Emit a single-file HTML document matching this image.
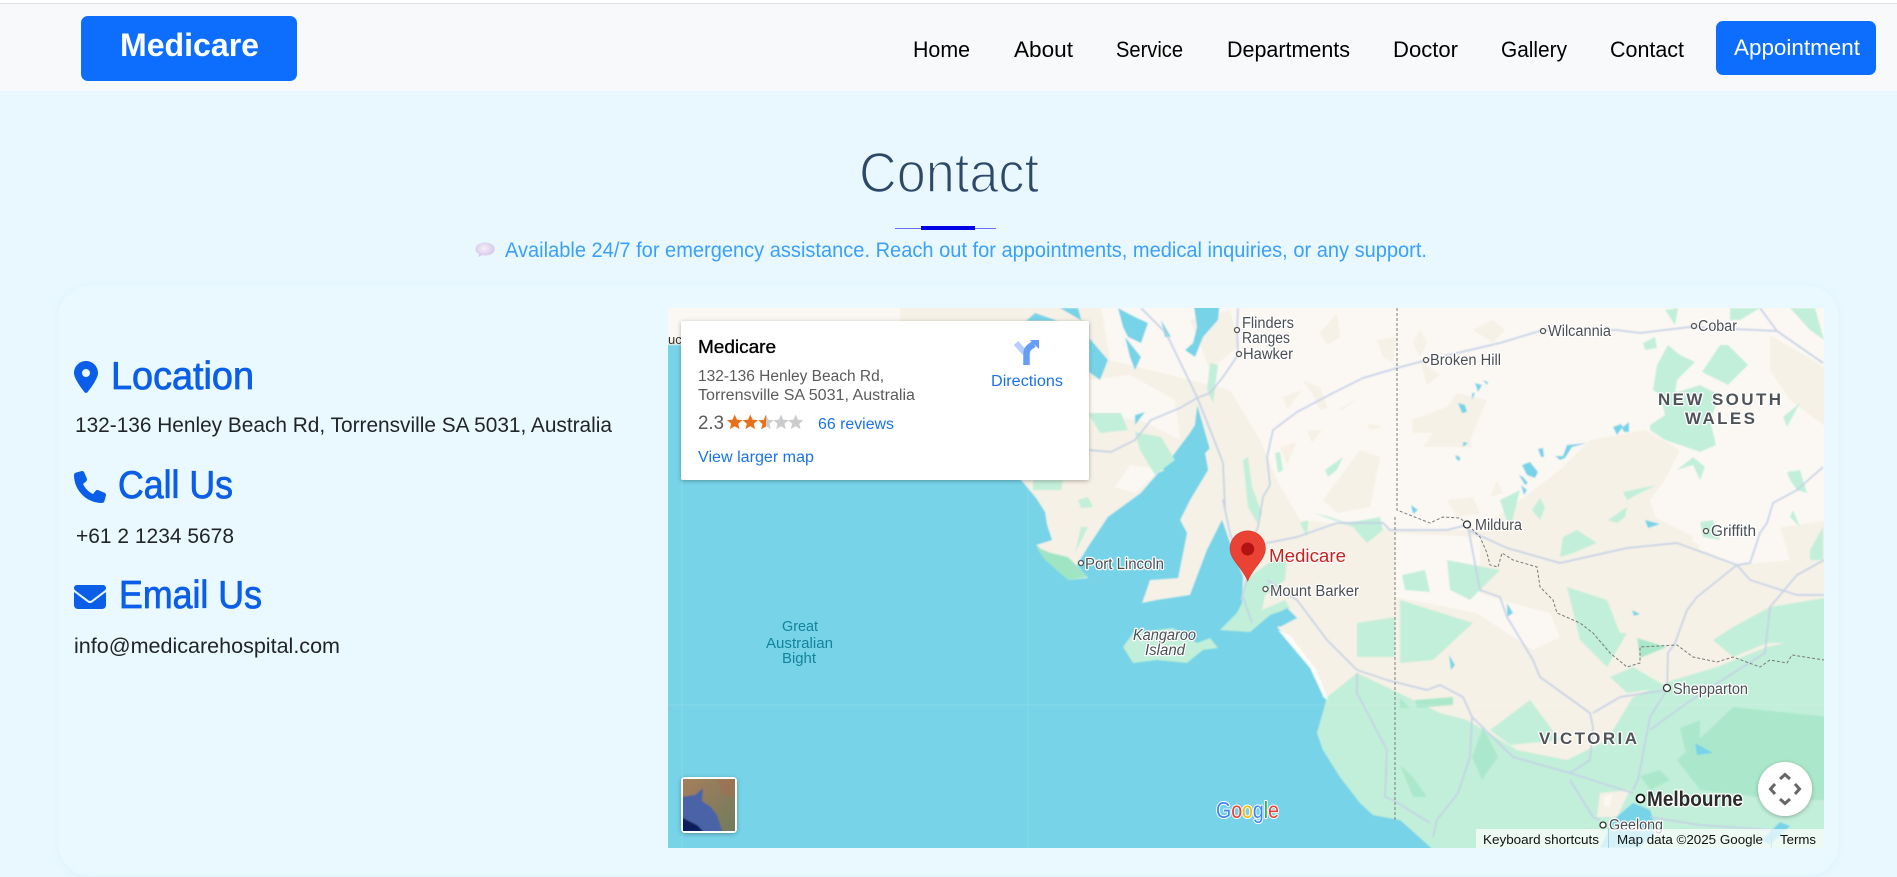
<!DOCTYPE html>
<html lang="en">
<head>
<meta charset="utf-8">
<title>Medicare - Contact</title>
<style>
html,body{margin:0;padding:0;width:1897px;height:877px;overflow:hidden;background:#e9f8ff}
svg{display:block}
text{font-family:"Liberation Sans",Arial,sans-serif}
.nav{font-size:22px;fill:#000}
.h{font-size:39px;fill:#0b5ee8;stroke:#0b5ee8;stroke-width:.8px}
.p{font-size:21.5px;fill:#212529}
.l{font-size:15.5px;fill:#4a4f54;stroke:#fff;stroke-width:2.5px;paint-order:stroke;stroke-linejoin:round}
.b{font-size:17px;font-weight:bold;fill:#4f5459;stroke:#fff;stroke-width:2.5px;paint-order:stroke;stroke-linejoin:round}
.a{font-size:13px;fill:#111}
.i{font-size:15.5px;fill:#5b5b5b}
.k{font-size:15.5px;fill:#1a73e8}
.land{fill:#f5f1e6}.light{fill:#fbf8f3}.g{fill:#c2efd9}.g2{fill:#abe8cb}.w{fill:#76d3e8}
.r{fill:none;stroke:#c4d0e6;stroke-width:1.7;stroke-linejoin:round}
.d{fill:none;stroke:#7a7a7a;stroke-width:1;stroke-dasharray:3 2}
.c{fill:#fff;stroke:#555;stroke-width:1.3}
</style>
</head>
<body>
<svg width="1897" height="877" viewBox="0 0 1897 877" xmlns="http://www.w3.org/2000/svg">
<defs>
<filter id="cs" x="-5%" y="-5%" width="110%" height="110%"><feDropShadow dx="0" dy="1" stdDeviation="3" flood-color="#5a8fb0" flood-opacity=".07"/></filter>
<filter id="s" x="-10%" y="-10%" width="120%" height="125%"><feDropShadow dx="0" dy="1" stdDeviation="2" flood-color="#000" flood-opacity=".3"/></filter>
<filter id="bl" x="0" y="0" width="100%" height="100%"><feGaussianBlur stdDeviation=".8"/></filter>
<filter id="bl2" x="0" y="0" width="100%" height="100%"><feGaussianBlur stdDeviation=".9"/></filter>
<linearGradient id="sat" x1="0" y1="0" x2="1" y2="1"><stop offset="0" stop-color="#a87e5c"/><stop offset="1" stop-color="#6f7a5a"/></linearGradient>
<radialGradient id="em" cx=".45" cy=".4" r=".65"><stop offset="0" stop-color="#f6f0fb"/><stop offset="1" stop-color="#cfc0e6"/></radialGradient>
</defs>

<!-- top bar -->
<rect x="0" y="0" width="1897" height="3" fill="#fff"/>
<rect x="0" y="3" width="1897" height="1" fill="#dfe1e3"/>
<rect x="0" y="4" width="1897" height="87" fill="#f8f9fa"/>
<rect x="81" y="16" width="216" height="65" rx="7" fill="#0d6efd"/>
<text x="120" y="56" font-size="32" font-weight="bold" fill="#fff" textLength="139" lengthAdjust="spacingAndGlyphs">Medicare</text>
<text class="nav" x="913" y="57" textLength="57" lengthAdjust="spacingAndGlyphs">Home</text>
<text class="nav" x="1014" y="57" textLength="59" lengthAdjust="spacingAndGlyphs">About</text>
<text class="nav" x="1116" y="57" textLength="67" lengthAdjust="spacingAndGlyphs">Service</text>
<text class="nav" x="1227" y="57" textLength="123" lengthAdjust="spacingAndGlyphs">Departments</text>
<text class="nav" x="1393" y="57" textLength="65" lengthAdjust="spacingAndGlyphs">Doctor</text>
<text class="nav" x="1501" y="57" textLength="66" lengthAdjust="spacingAndGlyphs">Gallery</text>
<text class="nav" x="1610" y="57" textLength="74" lengthAdjust="spacingAndGlyphs">Contact</text>
<rect x="1716" y="21" width="160" height="54" rx="7" fill="#0d6efd"/>
<text x="1734" y="55" font-size="22" fill="#fff" textLength="126" lengthAdjust="spacingAndGlyphs">Appointment</text>

<!-- heading -->
<text x="859" y="192" font-size="57" fill="#2c4a68" stroke="#e9f8ff" stroke-width="1.6" textLength="180" lengthAdjust="spacingAndGlyphs">Contact</text>
<rect x="895" y="228" width="101" height="1" fill="#6f6ff5"/>
<rect x="921" y="226" width="54" height="4" fill="#0000e6"/>
<path d="M475.500 249c0-4 4.300-6.500 9.600-6.500s9.600 2.500 9.600 6.500-4.300 6.500-9.600 6.500c-1.200 0-2.300-.1-3.300-.4l-3.300 2 .6-3.200c-2.400-1.100-3.600-2.600-3.600-4.400z" fill="url(#em)"/>
<text x="505" y="257" font-size="21" fill="#3aa0fa" textLength="922" lengthAdjust="spacingAndGlyphs">Available 24/7 for emergency assistance. Reach out for appointments, medical inquiries, or any support.</text>

<!-- card -->
<rect x="58" y="285" width="1781" height="591" rx="32" fill="#e9f9ff" stroke="#e4f5fd" stroke-width="1" filter="url(#cs)"/>

<!-- left column -->
<svg x="74" y="361" width="24" height="32" viewBox="0 0 384 512"><path fill="#0b5ee8" d="M215.700 499.200C267 435 384 279.400 384 192C384 86 298 0 192 0S0 86 0 192c0 87.400 117 243 168.300 307.200c12.300 15.300 35.100 15.300 47.400 0zM192 128a64 64 0 1 1 0 128 64 64 0 1 1 0-128z"/></svg>
<text class="h" x="111" y="389" textLength="143" lengthAdjust="spacingAndGlyphs">Location</text>
<text class="p" x="75" y="432" textLength="537" lengthAdjust="spacingAndGlyphs">132-136 Henley Beach Rd, Torrensville SA 5031, Australia</text>

<svg x="74" y="471" width="32" height="32" viewBox="0 0 512 512"><path fill="#0b5ee8" d="M164.900 24.600c-7.700-18.600-28-28.500-47.400-23.200l-88 24C12.100 30.200 0 46 0 64C0 311.400 200.600 512 448 512c18 0 33.800-12.100 38.600-29.500l24-88c5.300-19.400-4.600-39.700-23.200-47.400l-96-40c-16.300-6.800-35.200-2.100-46.300 11.600L304.700 368C234.300 334.700 177.300 277.700 144 207.300L193.300 167c13.700-11.200 18.400-30 11.600-46.300l-40-96z"/></svg>
<text class="h" x="118" y="498" textLength="115" lengthAdjust="spacingAndGlyphs">Call Us</text>
<text class="p" x="76" y="543" textLength="158" lengthAdjust="spacingAndGlyphs">+61 2 1234 5678</text>

<svg x="74" y="581" width="32" height="32" viewBox="0 0 512 512"><path fill="#0b5ee8" d="M48 64C21.500 64 0 85.500 0 112c0 15.100 7.100 29.300 19.200 38.400L236.800 313.600c11.400 8.500 27 8.500 38.400 0L492.800 150.400c12.100-9.100 19.200-23.300 19.200-38.400c0-26.500-21.500-48-48-48H48zM0 176V384c0 35.300 28.700 64 64 64H448c35.300 0 64-28.700 64-64V176L294.400 339.200c-22.800 17.100-54 17.100-76.800 0L0 176z"/></svg>
<text class="h" x="119" y="608" textLength="143" lengthAdjust="spacingAndGlyphs">Email Us</text>
<text class="p" x="74" y="653" textLength="266" lengthAdjust="spacingAndGlyphs">info@medicarehospital.com</text>

<!-- map -->
<svg x="668" y="308" width="1156" height="540" viewBox="668 308 1156 540">
<rect x="668" y="308" width="1156" height="540" class="w"/>
<g filter="url(#bl)">
<path class="land" d="M660 300L1830 300L1824 800L1793 817L1775 835L1760 856L1440 856L1433 845L1417 833L1400 820L1373 815L1360 803L1340 777L1323 750L1317 733L1327 700L1307 660L1277 627L1297 618L1287 608L1270 615L1250 632L1220 630L1237 613L1242 603L1243 577L1230 543L1222 520L1207 550L1190 595L1157 600L1142 603L1150 580L1178 578L1187 533L1180 520L1190 500L1208 470L1205 453L1215 443L1205 420L1198 400L1195 425L1190 433L1172 457L1141 493L1108 517L1088 547L1077 565L1088 578L1068 580L1060 565L1036 545L1052 540L1047 525L1045 512L1036 498L1021 480L900 420L681 345L660 345Z"/>
<!-- light desert -->
<path class="light" d="M1100 300L1830 300L1830 520L1700 540L1660 520L1560 470L1480 530L1400 530L1300 520L1230 400L1190 380L1110 360Z"/>
<path class="light" d="M660 300L900 300L900 330L660 340Z"/>
<path class="light" d="M1089 380L1130 375L1175 400L1180 440L1140 420L1089 415Z"/>
<path class="light" d="M1115 487L1135 493L1158 473L1165 470L1130 465Z"/>
<path class="light" d="M1395 533L1480 537L1480 593L1500 600L1550 613L1560 637L1533 650L1477 613L1395 597Z"/>
<path class="light" d="M1700 522L1773 503L1790 560L1737 565L1690 545Z"/>
<!-- tan patches -->
<path class="land" d="M1190 380L1230 390L1260 440L1290 510L1300 530L1240 530L1220 500L1210 450Z"/>
<path class="land" d="M1560 470L1590 440L1645 430L1680 450L1665 480L1650 500L1660 530L1700 545L1680 580L1560 580Z"/>
<path class="land" d="M1770 335L1830 370L1830 430L1790 400L1770 370Z"/>
<path class="land" d="M1320 333L1337 313L1340 337L1327 345ZM1302 380L1320 387L1328 408L1320 410L1312 393ZM1283 397L1302 390L1287 410ZM1337 410L1360 397L1343 410ZM1307 430L1322 430L1312 443ZM1280 447L1297 442L1287 465ZM1323 500L1360 450L1380 457L1370 507L1337 513ZM1412 420L1447 407L1457 393L1487 400L1470 440L1473 447L1423 447L1433 433L1413 433ZM1377 340L1397 337L1393 363L1383 357ZM1413 343L1420 330L1427 343L1420 357ZM1493 320L1505 330L1493 343L1473 330ZM1420 360L1440 375L1427 385ZM1367 423L1383 427L1370 430ZM1497 480L1503 493L1490 497ZM1447 500L1473 497L1480 513L1457 517ZM1190 320L1230 310L1240 345L1210 370Z"/>
<!-- green south -->
<path class="g" d="M1327 697L1357 673L1393 690L1440 713L1467 720L1517 750L1567 760L1607 740L1633 697L1673 680L1717 667L1767 647L1830 633L1830 856L1440 856L1400 820L1373 815L1360 803L1340 777L1323 750L1317 733Z"/>
<path class="land" d="M1600 793L1630 790L1617 817L1597 817Z"/>
<path class="light" d="M1604 797L1612 794L1610 806L1604 806Z"/>
<path class="g2" d="M1677 760L1733 707L1830 717L1830 800L1783 800L1700 790Z"/>
<path class="g" d="M1400 600L1473 623L1433 660L1400 663ZM1357 623L1395 617L1395 657L1357 657ZM1770 607L1830 597L1830 643L1767 643L1733 657L1713 640L1733 627ZM1567 587L1607 600L1620 633L1627 633L1607 667L1580 640ZM1610 677L1633 667L1667 687L1627 693ZM1490 730L1530 700L1560 740L1510 745Z"/>
<path class="g2" d="M1415 700L1453 697L1453 705L1417 708ZM1400 698L1410 708L1400 708ZM1472 757L1483 727L1498 757L1482 780ZM1400 765L1413 777L1427 797L1413 797ZM1593 633L1613 657L1607 647ZM1637 638L1667 647L1640 658ZM1640 776L1660 770L1670 780L1650 790ZM1680 728L1700 720L1700 750L1685 750Z"/>
<!-- green north / SA -->
<path class="g" d="M1653 390L1657 365L1668 345L1680 355L1695 362L1677 380L1675 393L1700 385L1720 395L1710 420L1716 445L1700 452L1680 445L1665 440L1650 430L1650 425L1665 415L1660 395Z"/>
<path class="g" d="M1702 372L1720 345L1728 345L1748 365L1728 385ZM1730 308L1760 308L1740 320L1730 320ZM1643 343L1655 337L1657 348L1645 350ZM1665 310L1678 308L1675 325ZM1700 522L1713 520L1720 540L1703 537ZM1623 492L1657 485L1640 493L1627 500ZM1608 520L1627 507L1625 517L1617 523ZM1563 537L1577 530L1597 543L1573 553L1560 557ZM1532 510L1540 498L1545 507L1540 520ZM1677 470L1693 457L1705 467L1700 480L1693 465ZM1787 472L1800 470L1807 493L1797 490L1790 480ZM1793 510L1800 527L1790 517ZM1810 550L1823 527L1823 560L1810 560ZM1783 417L1800 403L1787 427ZM1790 308L1815 308L1824 340L1810 330Z"/>
<path class="g" d="M1243 460L1248 457L1252 487L1262 513L1257 523L1248 507ZM1275 453L1280 452L1283 470L1278 473ZM1325 470L1343 457L1337 470L1328 477ZM1313 513L1330 517L1347 523L1380 517L1383 530L1367 543L1353 527ZM1210 363L1218 365L1213 403L1207 390ZM1300 523L1308 520L1307 537ZM1088 413L1121 413L1128 430L1100 433ZM1135 432L1161 437L1175 460L1155 475L1140 450ZM1033 480L1063 480L1061 490L1033 490ZM1078 500L1088 497L1093 507L1081 508ZM1081 527L1088 527L1075 553ZM1447 560L1500 570L1470 600L1450 590ZM1402 575L1425 570L1430 592L1405 590ZM1500 500L1520 490L1510 530ZM1400 610L1430 625L1405 650Z"/>
<path d="M1036 547L1051 553L1068 557L1088 577L1068 580L1045 560Z" fill="#9fe5c4"/>
<path class="g" d="M1245 580L1280 555L1287 557L1285 580L1265 595L1262 610L1285 600L1290 608L1270 615L1250 632L1220 630L1237 613L1242 603Z"/>
<path class="g" d="M1123 647L1133 633L1173 628L1197 643L1210 638L1218 648L1203 650L1187 663L1157 660L1133 663Z"/>
<path class="w" d="M1287 608L1297 618L1280 627L1276 622L1272 628L1266 620Z"/>
<path fill="#fff" d="M1278 630L1290 636L1316 670L1328 700L1324 698L1310 668Z"/>
<!-- lakes -->
<path class="w" d="M1060 308L1078 308L1085 333L1108 360L1100 380L1089 372L1089 325ZM1026 321L1035 313L1058 321ZM1118 308L1135 317L1148 323L1141 343L1128 337L1123 327ZM1125 337L1141 357L1135 370L1130 357ZM1161 320L1171 337L1165 337ZM1135 415L1145 412L1135 425ZM1193 300L1220 300L1218 320L1203 337L1195 357L1185 350L1193 343L1197 327ZM1475 383L1482 385L1478 392ZM1472 393L1475 393L1472 400ZM1458 403L1465 405L1467 412L1462 413ZM1483 380L1488 382L1487 385ZM1463 442L1468 443L1463 447ZM1455 455L1460 457L1460 461L1457 460ZM1522 465L1530 462L1538 472L1535 478L1527 475ZM1519 475L1523 477L1528 483L1525 485ZM1521 485L1527 490L1524 495ZM1538 449L1543 448L1544 457L1541 457ZM1555 456L1563 456L1567 445L1587 443L1572 447L1565 458L1560 460ZM1613 427L1621 424L1623 427L1629 422L1629 432L1624 432L1622 428L1617 435ZM1507 603L1513 613L1507 617ZM1449 655L1455 665L1451 670ZM1695 743L1713 753L1697 755ZM1613 820L1633 803L1650 810L1657 830L1640 848L1600 848ZM1780 822L1790 826L1770 845L1762 840ZM1411 505L1418 510L1413 514ZM1645 520L1660 524L1648 528ZM1632 610L1640 614L1634 616Z"/>
</g>
<!-- tile seams -->
<path d="M668 705H1824M682 308V848M1028 308V848" stroke="#fff" stroke-opacity=".12" fill="none"/>
<!-- roads -->
<g filter="url(#bl2)" opacity=".95">
<path class="r" d="M1089 450L1111 452L1135 440L1151 420L1180 408L1197 398L1210 393L1223 377L1238 355L1237 330L1238 308"/>
<path class="r" d="M1141 308L1166 333L1197 397L1213 437L1223 463L1225 507L1223 500L1230 533L1245 575"/>
<path class="r" d="M1427 360L1397 368L1363 378L1333 393L1297 412L1273 430L1267 457L1270 485L1263 497L1258 527L1250 545"/>
<path class="r" d="M1427 360L1500 343L1543 330L1617 330L1640 333L1690 327L1777 331L1823 363M1777 331L1760 308"/>
<path class="r" d="M1267 543L1297 537L1337 523L1357 523L1383 523L1390 530L1447 530L1467 525"/>
<path class="r" d="M1468 527L1480 590L1500 597L1507 617L1533 660L1540 677L1590 713L1593 727L1590 760L1570 773"/>
<path class="r" d="M1468 530L1483 537L1507 548L1560 563L1627 548L1677 543L1737 565L1750 563L1760 533L1767 523L1773 503L1797 490L1823 467"/>
<path class="r" d="M1737 565L1750 580L1797 595L1824 595"/>
<path class="r" d="M1737 565L1697 597L1687 610L1675 643L1668 653L1667 690L1620 697L1593 713"/>
<path class="r" d="M1667 690L1650 717L1638 780L1633 790"/>
<path class="r" d="M1824 560L1797 575L1770 607L1765 653L1727 677L1687 703L1650 730"/>
<path class="r" d="M1267 580L1297 600L1327 640L1357 670L1387 680L1427 690L1440 685L1463 697L1472 717L1513 757L1570 773L1633 793"/>
<path class="r" d="M1357 673L1357 693L1387 750L1385 797L1393 800L1430 823M1472 717L1470 757L1458 793L1437 820L1433 837"/>
<path class="r" d="M1570 780L1593 817L1600 820M1650 817L1700 825L1770 830M1243 597L1252 623M1247 580L1241 600"/>
</g>
<!-- borders -->
<path class="d" d="M1397 308V510L1430 523L1443 517L1460 518L1467 524L1480 537L1487 553L1490 565L1498 567L1502 553L1513 560L1537 567L1540 587L1553 600L1557 613L1580 623L1593 633L1610 653L1627 667L1640 663L1640 647L1677 645L1693 657L1717 662L1733 657L1760 667L1770 660L1787 663L1792 655L1824 660"/>
<path class="d" d="M1395 517V820"/>
<!-- labels -->
<text x="668" y="344" font-size="13" fill="#333">uc</text>
<circle class="c" cx="1237" cy="330" r="2.500"/>
<text class="l" x="1242" y="328" textLength="52" lengthAdjust="spacingAndGlyphs">Flinders</text>
<text class="l" x="1242" y="343" textLength="48" lengthAdjust="spacingAndGlyphs">Ranges</text>
<circle class="c" cx="1239" cy="354" r="2.500"/>
<text class="l" x="1243" y="359" textLength="50" lengthAdjust="spacingAndGlyphs">Hawker</text>
<circle class="c" cx="1426" cy="360" r="2.500"/>
<text class="l" x="1430" y="365" textLength="71" lengthAdjust="spacingAndGlyphs">Broken Hill</text>
<circle class="c" cx="1543" cy="331" r="2.500"/>
<text class="l" x="1548" y="336" textLength="63" lengthAdjust="spacingAndGlyphs">Wilcannia</text>
<circle class="c" cx="1694" cy="326" r="2.500"/>
<text class="l" x="1698" y="331" textLength="39" lengthAdjust="spacingAndGlyphs">Cobar</text>
<text class="b" x="1658" y="405" textLength="123" lengthAdjust="spacing">NEW SOUTH</text>
<text class="b" x="1685" y="424" textLength="70" lengthAdjust="spacing">WALES</text>
<circle class="c" cx="1706" cy="531" r="2.500"/>
<text class="l" x="1711" y="536" textLength="45" lengthAdjust="spacingAndGlyphs">Griffith</text>
<circle class="c" cx="1467" cy="524.500" r="3.500" style="stroke:#333"/>
<text class="l" x="1475" y="530" textLength="47" lengthAdjust="spacingAndGlyphs">Mildura</text>
<circle class="c" cx="1265.500" cy="589" r="2.500"/>
<text class="l" x="1270" y="596" textLength="89" lengthAdjust="spacingAndGlyphs">Mount Barker</text>
<circle class="c" cx="1081" cy="563" r="2.500"/>
<text class="l" x="1085" y="569" textLength="79" lengthAdjust="spacingAndGlyphs">Port Lincoln</text>
<text class="l" x="1133" y="640" font-style="italic" textLength="63" lengthAdjust="spacingAndGlyphs">Kangaroo</text>
<text class="l" x="1145" y="655" font-style="italic" textLength="40" lengthAdjust="spacingAndGlyphs">Island</text>
<g font-size="15" fill="#12849a">
<text x="782" y="631" textLength="36" lengthAdjust="spacingAndGlyphs">Great</text>
<text x="766" y="648" textLength="67" lengthAdjust="spacingAndGlyphs">Australian</text>
<text x="782" y="663" textLength="34" lengthAdjust="spacingAndGlyphs">Bight</text>
</g>
<text class="b" x="1539" y="744" textLength="98" lengthAdjust="spacing">VICTORIA</text>
<circle class="c" cx="1667" cy="688" r="3.500" style="stroke:#333"/>
<text class="l" x="1673" y="694" textLength="75" lengthAdjust="spacingAndGlyphs">Shepparton</text>
<circle class="c" cx="1640.500" cy="798.500" r="4" style="stroke:#111;stroke-width:1.800"/>
<text x="1647" y="806" font-size="21" font-weight="bold" fill="#2b2b2b" stroke="#fff" stroke-width="2.500" paint-order="stroke" stroke-linejoin="round" textLength="96" lengthAdjust="spacingAndGlyphs">Melbourne</text>
<circle class="c" cx="1603" cy="825" r="3" style="stroke:#333"/>
<text class="l" x="1609" y="830" textLength="54" lengthAdjust="spacingAndGlyphs">Geelong</text>
<!-- marker -->
<path d="M1247.700 581C1243 568 1230 560 1230 548.500a17.700 17.700 0 0 1 35.400 0C1265.400 560 1252.500 568 1247.700 581Z" fill="#ea4335" stroke="#d2372b" stroke-width=".6"/>
<circle cx="1247.700" cy="549" r="6.500" fill="#b31412"/>
<text x="1269" y="562" font-size="18.500" fill="#c5221f" stroke="#fff" stroke-width="2" paint-order="stroke" stroke-linejoin="round" textLength="77" lengthAdjust="spacingAndGlyphs">Medicare</text>
<!-- Google -->
<text x="1216" y="818" font-size="23" stroke="#fff" stroke-width="2" paint-order="stroke" stroke-linejoin="round" textLength="63" lengthAdjust="spacingAndGlyphs"><tspan fill="#4285f4">G</tspan><tspan fill="#ea4335">o</tspan><tspan fill="#fbbc05">o</tspan><tspan fill="#4285f4">g</tspan><tspan fill="#34a853">l</tspan><tspan fill="#ea4335">e</tspan></text>
<!-- satellite -->
<rect x="681" y="777" width="56" height="56" rx="4" fill="#fff" filter="url(#s)"/>
<svg x="683" y="779" width="52" height="52" viewBox="0 0 52 52">
<g filter="url(#bl)">
<rect x="-2" y="-2" width="56" height="56" fill="url(#sat)"/>
<path d="M-2 18L12 16L20 9L19 22L28 28L34 36L40 54L-2 54Z" fill="#4a64a6"/>
<path d="M-2 38L14 46L22 54L-2 54Z" fill="#101f5c"/>
<path d="M34 0H54V18L40 16Z" fill="#a0704f" opacity=".6"/>
</g>
</svg>
<!-- move control -->
<circle cx="1785" cy="789" r="27" fill="#fff" filter="url(#s)"/>
<path d="M1780 779L1785 774.500L1790 779M1780 799L1785 803.500L1790 799M1775 784L1770.500 789L1775 794M1795 784L1799.500 789L1795 794" fill="none" stroke="#666" stroke-width="3"/>
<!-- attribution -->
<rect x="1476" y="829" width="348" height="19" fill="#fff" fill-opacity=".7"/>
<rect x="1608" y="829" width="1" height="19" fill="#9fd8ec"/>
<rect x="1771" y="829" width="1" height="19" fill="#dbe8ec"/>
<text class="a" x="1483" y="844" textLength="116" lengthAdjust="spacingAndGlyphs">Keyboard shortcuts</text>
<text class="a" x="1617" y="844" textLength="146" lengthAdjust="spacingAndGlyphs">Map data ©2025 Google</text>
<text class="a" x="1780" y="844" textLength="36" lengthAdjust="spacingAndGlyphs">Terms</text>
<!-- info card -->
<rect x="681" y="321" width="408" height="159" rx="2" fill="#fff" filter="url(#s)"/>
<text x="698" y="353" font-size="18" fill="#000" stroke="#000" stroke-width=".35" textLength="78" lengthAdjust="spacingAndGlyphs">Medicare</text>
<text class="i" x="698" y="381" textLength="186" lengthAdjust="spacingAndGlyphs">132-136 Henley Beach Rd,</text>
<text class="i" x="698" y="400" textLength="217" lengthAdjust="spacingAndGlyphs">Torrensville SA 5031, Australia</text>
<text x="698" y="429" font-size="19" fill="#5b5b5b" textLength="26" lengthAdjust="spacingAndGlyphs">2.3</text>
<g>
<path fill="#e7711b" d="M734.700 414.500l2.200 5.100 5.500.5-4.200 3.600 1.300 5.400-4.800-2.900-4.800 2.900 1.300-5.400-4.200-3.600 5.500-.5z"/>
<path fill="#e7711b" d="M750.300 414.500l2.200 5.100 5.500.5-4.200 3.600 1.300 5.400-4.800-2.900-4.800 2.900 1.300-5.400-4.200-3.600 5.500-.5z"/>
<path fill="#ccc" d="M766 414.500l2.200 5.100 5.500.5-4.200 3.600 1.300 5.400-4.800-2.900-4.800 2.900 1.300-5.400-4.200-3.600 5.500-.5z"/>
<path fill="#e7711b" d="M766 414.500v12l-4.800 2.900 1.300-5.400-4.200-3.600 5.500-.5z"/>
<path fill="#ccc" d="M781 414.500l2.200 5.100 5.500.5-4.200 3.600 1.300 5.400-4.800-2.900-4.800 2.900 1.300-5.400-4.200-3.600 5.500-.5z"/>
<path fill="#ccc" d="M795.700 414.500l2.200 5.100 5.500.5-4.200 3.600 1.300 5.400-4.800-2.900-4.800 2.900 1.300-5.400-4.200-3.600 5.500-.5z"/>
</g>
<text class="k" x="818" y="429" textLength="76" lengthAdjust="spacingAndGlyphs">66 reviews</text>
<text class="k" x="698" y="462" textLength="116" lengthAdjust="spacingAndGlyphs">View larger map</text>
<path d="M1016 343L1025 353" stroke="#b8ccff" stroke-width="6" fill="none"/>
<path d="M1026.500 365V354Q1026.500 349 1031 346L1034 344" stroke="#669df6" stroke-width="6.500" fill="none"/>
<path d="M1030 340H1039V349Z" fill="#669df6"/>
<text class="k" x="991" y="386" textLength="72" lengthAdjust="spacingAndGlyphs">Directions</text>
</svg>
</svg>
</body>
</html>
